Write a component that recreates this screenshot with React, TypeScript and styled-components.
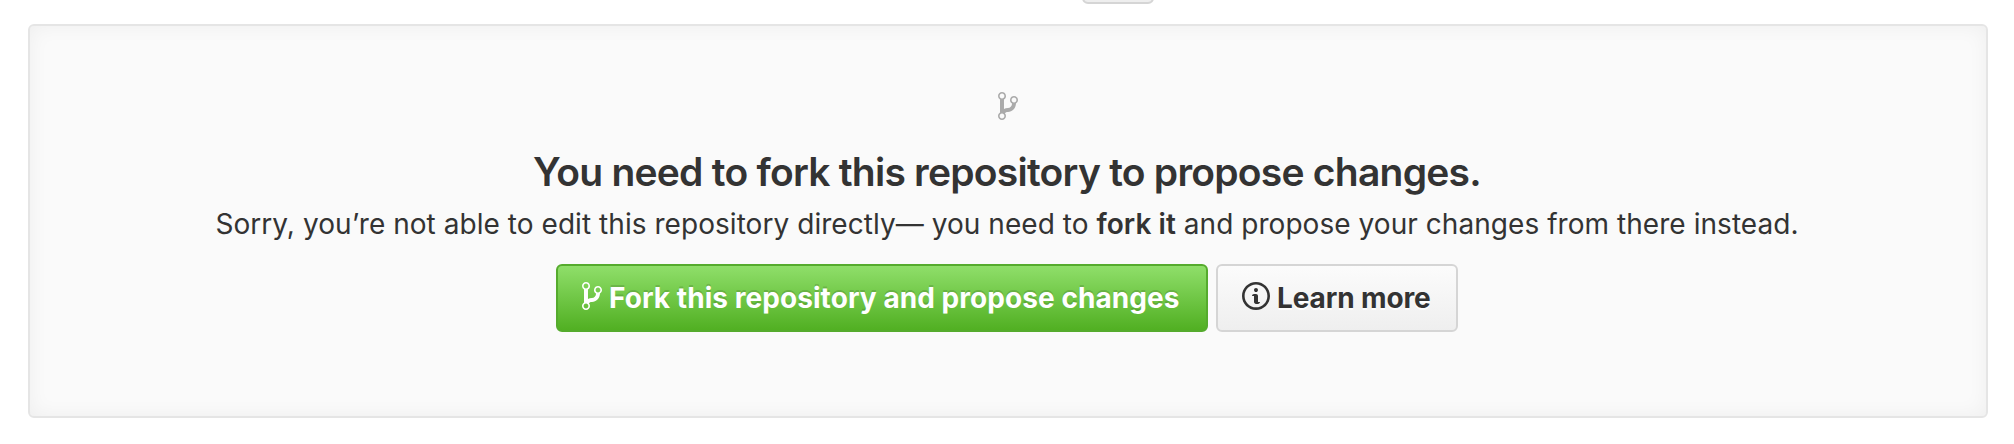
import React from "react";
import styled, { createGlobalStyle, css } from "styled-components";

const GlobalStyle = createGlobalStyle`
  *, *::before, *::after { box-sizing: border-box; }
  body {
    margin: 0;
    background: #fff;
    color: #333;
    font-family: Inter, "Liberation Sans", sans-serif;
    font-size: 28px;
    line-height: 40px;
  }
`;

const Page = styled.div`
  width: 2014px;
  height: 444px;
  overflow: hidden;
  display: flex;
  flex-direction: column;
  padding: 0 26px 0 28px;
`;

const TopBar = styled.div`
  display: flex;
  align-items: flex-start;
  height: 24px;
  flex: none;
  padding-left: 1054px;
`;

const ToolbarButton = styled.div`
  width: 72px;
  height: 16px;
  margin-top: -12px;
  border: 2px solid #d5d5d5;
  border-radius: 6px;
  background: #eee;
`;

const Blankslate = styled.section`
  height: 394px;
  flex: none;
  display: flex;
  flex-direction: column;
  align-items: center;
  padding: 64px 2px 0 0;
  border: 2px solid #e5e5e5;
  border-radius: 6px;
  background: #fafafa;
  box-shadow: inset 0 0 20px rgba(0, 0, 0, 0.05);
  white-space: nowrap;
`;

const Icon = styled.svg<{ $color?: string }>`
  display: block;
  flex: none;
  height: 32px;
  fill: ${(p) => p.$color ?? "currentColor"};
`;

const Mark = styled.div`
  padding-left: 2px;
`;

const Title = styled.h3`
  margin: 26px 0 0;
  font-size: 39px;
  line-height: 48px;
  font-weight: 600;
  letter-spacing: -0.76px;
`;

const Message = styled.p`
  margin: 8px 0 0;
  line-height: 40px;
  letter-spacing: 0.05px;

  strong { font-weight: 600; }
`;

const Actions = styled.div`
  display: flex;
  gap: 8px;
  margin-top: 20px;
`;

const Button = styled.button<{ $primary?: boolean }>`
  display: flex;
  align-items: flex-start;
  width: ${(p) => (p.$primary ? 652 : 242)}px;
  height: 68px;
  padding: 14px 0 0 24px;
  gap: 7px;
  border: 2px solid #d5d5d5;
  border-radius: 6px;
  background: linear-gradient(#fcfcfc, #eee) border-box;
  color: #333;
  font: 700 28px/36px Inter, "Liberation Sans", sans-serif;
  white-space: nowrap;
  text-shadow: 0 2px 0 rgba(255, 255, 255, 0.9);

  ${(p) =>
    p.$primary &&
    css`
      border-color: #55ab2d;
      background: linear-gradient(#91e06c, #4fae20) border-box;
      color: #fff;
      text-shadow: 0 -2px 0 rgba(0, 0, 0, 0.15);
    `}
`;

const Label = styled.span<{ $spacing: number }>`
  letter-spacing: ${(p) => p.$spacing}px;
`;

const BranchIcon = ({ color }: { color?: string }) => (
  <Icon $color={color} viewBox="0 0 10 16" width="20" height="32" aria-hidden="true">
    <path
      fillRule="evenodd"
      d="M10 5c0-1.11-.89-2-2-2a1.993 1.993 0 0 0-1 3.72v.3c-.02.52-.23.98-.63 1.38-.4.4-.86.61-1.38.63-.83.02-1.48.16-2 .45V4.72a1.993 1.993 0 0 0-1-3.72C.88 1 0 1.89 0 3a2 2 0 0 0 1 1.72v6.56c-.59.35-1 .99-1 1.72 0 1.11.89 2 2 2 1.11 0 2-.89 2-2 0-.53-.2-1-.53-1.36.09-.06.48-.41.59-.47.25-.11.56-.17.94-.17 1.05-.05 1.95-.45 2.75-1.25S8.95 7.77 9 6.73h-.02C9.59 6.37 10 5.73 10 5zM2 1.8c.66 0 1.2.55 1.2 1.2 0 .65-.55 1.2-1.2 1.2C1.35 4.2.8 3.65.8 3c0-.65.55-1.2 1.2-1.2zm0 12.41c-.66 0-1.2-.55-1.2-1.2 0-.65.55-1.2 1.2-1.2.65 0 1.2.55 1.2 1.2 0 .65-.55 1.2-1.2 1.2zm6-8c-.66 0-1.2-.55-1.2-1.2 0-.65.55-1.2 1.2-1.2.65 0 1.2.55 1.2 1.2 0 .65-.55 1.2-1.2 1.2z"
    />
  </Icon>
);

const InfoIcon = () => (
  <Icon viewBox="0 0 14 16" width="28" height="32" aria-hidden="true">
    <path
      fillRule="evenodd"
      d="M6.3 5.69a.942.942 0 0 1-.28-.7c0-.28.09-.52.28-.7.19-.18.42-.28.7-.28.28 0 .52.09.7.28.18.19.28.42.28.7 0 .28-.09.52-.28.7a1 1 0 0 1-.7.3c-.28 0-.52-.11-.7-.3zM8 7.99c-.02-.25-.11-.48-.31-.69-.2-.19-.42-.3-.69-.31H6c-.27.02-.48.13-.69.31-.2.2-.3.44-.31.69h1v3c.02.27.11.5.31.69.2.2.42.31.69.31h1c.27 0 .48-.11.69-.31.2-.19.3-.42.31-.69H8V7.98v.01zM7 2.3c-3.14 0-5.7 2.54-5.7 5.68 0 3.14 2.56 5.7 5.7 5.7s5.7-2.55 5.7-5.7c0-3.15-2.56-5.69-5.7-5.69v.01zM7 .98c3.86 0 7 3.14 7 7s-3.14 7-7 7-7-3.12-7-7 3.14-7 7-7z"
    />
  </Icon>
);

export default function App() {
  return (
    <>
      <GlobalStyle />
      <Page>
        <TopBar>
          <ToolbarButton />
        </TopBar>
        <Blankslate>
          <Mark>
            <BranchIcon color="#aaa" />
          </Mark>
          <Title>You need to fork this repository to propose changes.</Title>
          <Message>
            Sorry, you’re not able to edit this repository directly— you need to <strong>fork it</strong> and
            propose your changes from there instead.
          </Message>
          <Actions>
            <Button $primary>
              <BranchIcon />
              <Label $spacing={0.06}>Fork this repository and propose changes</Label>
            </Button>
            <Button>
              <InfoIcon />
              <Label $spacing={-0.12}>Learn more</Label>
            </Button>
          </Actions>
        </Blankslate>
      </Page>
    </>
  );
}
